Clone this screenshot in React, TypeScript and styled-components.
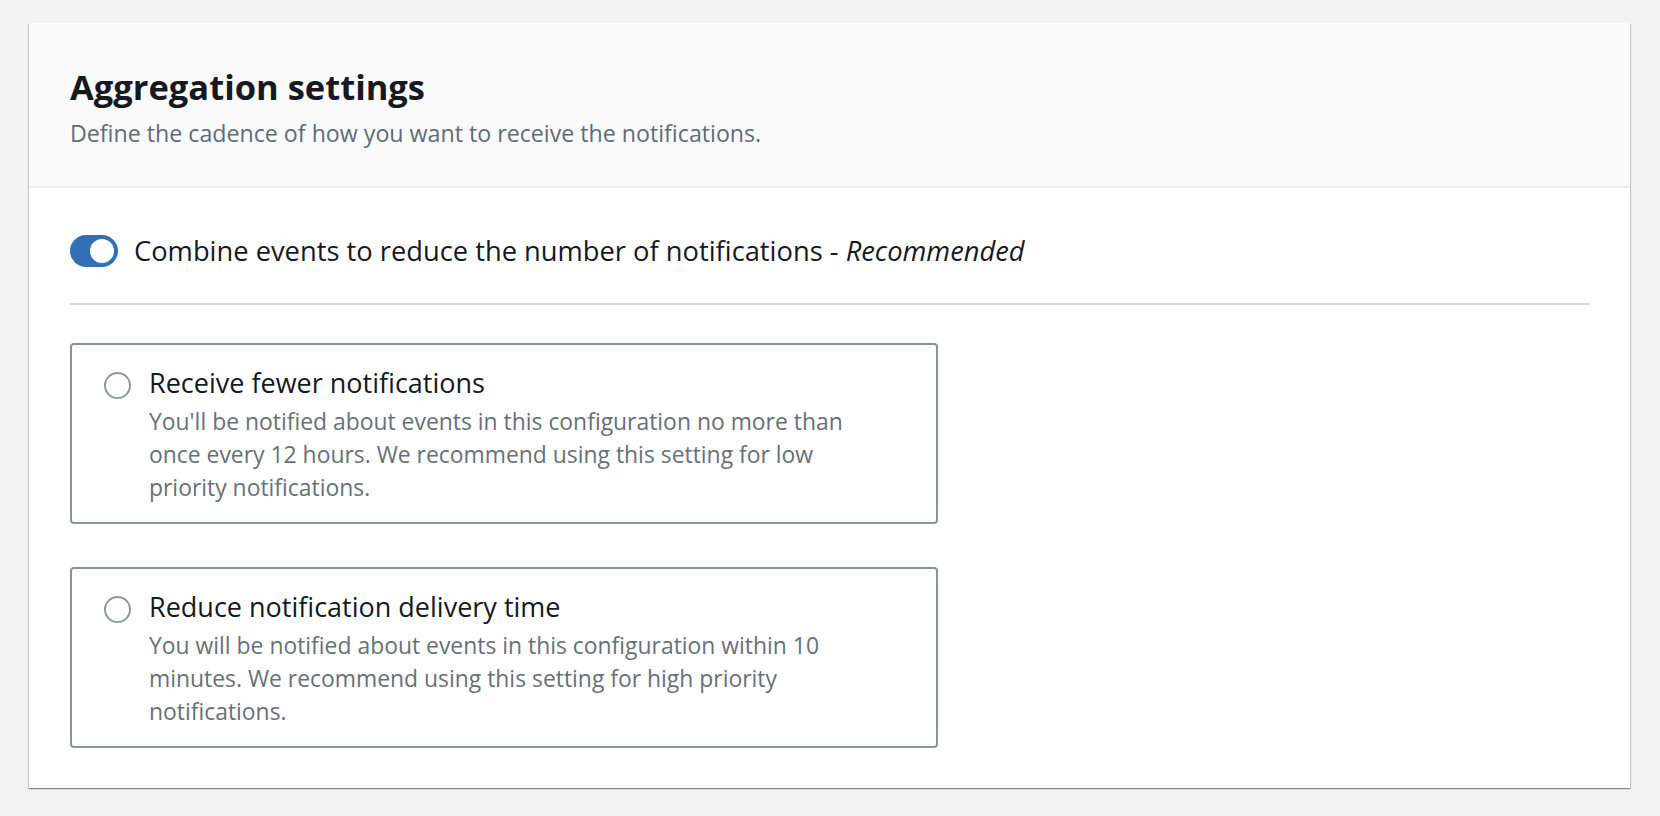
import React, { useState } from 'react';
import styled, { createGlobalStyle } from 'styled-components';

const GlobalStyle = createGlobalStyle`
    html, body {
        margin: 0;
        padding: 0;
        background: #f2f2f2;
        font-family: "Open Sans", "Noto Sans", sans-serif;
        color: #16191f;
    }
`;

const Page = styled.div`
    padding: 23px 30px 26px 29px;
`;

const Container = styled.section`
    background: #ffffff;
    box-shadow: 0 1px 1px 0 rgba(0, 28, 36, 0.3), 1px 1px 1px 0 rgba(0, 28, 36, 0.15), -1px 1px 1px 0 rgba(0, 28, 36, 0.15);
`;

const Header = styled.header`
    background: #fafafa;
    border-bottom: 2px solid #eaeded;
    padding: 42px 41px 37px;
`;

const Title = styled.h2`
    margin: 0;
    font-size: 34.5px;
    line-height: 44px;
    font-weight: 700;
    color: #16191f;
`;

const Description = styled.p`
    margin: 8px 0 0;
    font-size: 23.2px;
    line-height: 32px;
    color: #5f6b7a;
`;

const Body = styled.div`
    padding: 45px 40px 40px 41px;
`;

const ToggleRow = styled.label`
    display: flex;
    align-items: center;
    gap: 16px;
    padding-bottom: 34px;
    border-bottom: 2px solid #d5dbdb;
    font-size: 27.3px;
    line-height: 36px;
    cursor: pointer;
`;

const Track = styled.span<{ $on: boolean }>`
    position: relative;
    flex: none;
    width: 48px;
    height: 32px;
    border-radius: 16px;
    background: ${p => (p.$on ? '#3170b7' : '#aab7b8')};
`;

const Knob = styled.span<{ $on: boolean }>`
    position: absolute;
    top: 4px;
    left: ${p => (p.$on ? '20px' : '4px')};
    width: 24px;
    height: 24px;
    border-radius: 50%;
    background: #ffffff;
`;

const Options = styled.div`
    display: flex;
    flex-direction: column;
    gap: 43px;
    width: 868px;
    margin-top: 38px;
`;

const OptionCard = styled.label`
    display: flex;
    gap: 18px;
    padding: 20px 46px 18px 32px;
    border: 2px solid #879596;
    border-radius: 4px;
    cursor: pointer;
`;

const Radio = styled.span<{ $checked: boolean }>`
    flex: none;
    box-sizing: border-box;
    width: 27px;
    height: 27px;
    margin-top: 7px;
    border-radius: 50%;
    border: ${p => (p.$checked ? '8px solid #0073bb' : '2px solid #8d9899')};
    background: #ffffff;
`;

const OptionText = styled.div`
    display: flex;
    flex-direction: column;
    gap: 4px;
`;

const OptionTitle = styled.span`
    font-size: 27px;
    line-height: 36px;
    color: #16191f;
`;

const OptionDesc = styled.span`
    font-size: 22.9px;
    line-height: 33px;
    color: #687078;
`;

const options = [
    {
        id: 'fewer',
        title: 'Receive fewer notifications',
        desc: "You'll be notified about events in this configuration no more than once every 12 hours. We recommend using this setting for low priority notifications.",
    },
    {
        id: 'faster',
        title: 'Reduce notification delivery time',
        desc: 'You will be notified about events in this configuration within 10 minutes. We recommend using this setting for high priority notifications.',
    },
];

export default function App() {
    const [combine, setCombine] = useState(true);
    const [selected, setSelected] = useState<string | null>(null);

    return <Page>
        <GlobalStyle />
        <Container>
            <Header>
                <Title>Aggregation settings</Title>
                <Description>Define the cadence of how you want to receive the notifications.</Description>
            </Header>
            <Body>
                <ToggleRow onClick={() => setCombine(!combine)}>
                    <Track $on={combine}><Knob $on={combine} /></Track>
                    <span>Combine events to reduce the number of notifications - <i>Recommended</i></span>
                </ToggleRow>
                <Options>
                    {options.map(o =>
                        <OptionCard key={o.id} onClick={() => setSelected(o.id)}>
                            <Radio $checked={selected === o.id} />
                            <OptionText>
                                <OptionTitle>{o.title}</OptionTitle>
                                <OptionDesc>{o.desc}</OptionDesc>
                            </OptionText>
                        </OptionCard>
                    )}
                </Options>
            </Body>
        </Container>
    </Page>;
}
